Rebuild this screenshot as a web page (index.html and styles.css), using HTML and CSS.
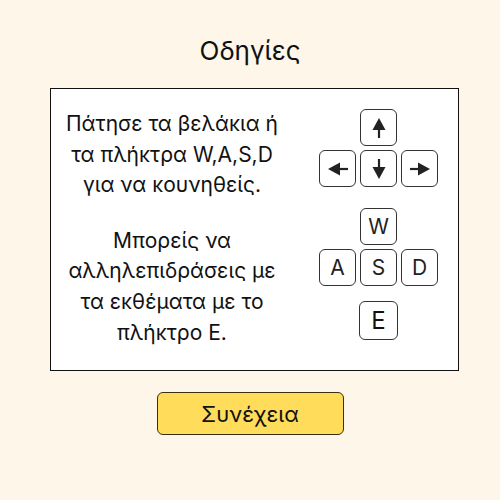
FILE: index.html
```html
<!DOCTYPE html>
<html lang="el">
<head>
<meta charset="utf-8">
<link rel="stylesheet" href="styles.css">
</head>
<body>
<div class="page">
  <h1 class="title">Οδηγίες</h1>
  <div class="panel">
    <div class="texts">
      <p class="para">Πάτησε τα βελάκια ή<br>τα πλήκτρα W,A,S,D<br>για να κουνηθείς.</p>
      <p class="para">Μπορείς να<br>αλληλεπιδράσεις με<br>τα εκθέματα με το<br>πλήκτρο E.</p>
    </div>
    <div class="keys">
      <div class="pad pad-arrows">
        <div class="row">
          <div class="key"><svg width="16" height="22" viewBox="0 0 16 22"><path d="M8 1 L14.5 13 L1.5 13 Z" fill="#222"/><path d="M8 12 V21" stroke="#222" stroke-width="2.2"/></svg></div>
        </div>
        <div class="row">
          <div class="key"><svg width="22" height="16" viewBox="0 0 22 16"><path d="M1 8 L13 1.5 L13 14.5 Z" fill="#222"/><path d="M12 8 H21" stroke="#222" stroke-width="2.2"/></svg></div>
          <div class="key"><svg width="16" height="22" viewBox="0 0 16 22"><path d="M8 21 L14.5 9 L1.5 9 Z" fill="#222"/><path d="M8 1 V10" stroke="#222" stroke-width="2.2"/></svg></div>
          <div class="key"><svg width="22" height="16" viewBox="0 0 22 16"><path d="M21 8 L9 1.5 L9 14.5 Z" fill="#222"/><path d="M1 8 H10" stroke="#222" stroke-width="2.2"/></svg></div>
        </div>
      </div>
      <div class="pad pad-wasd">
        <div class="row"><div class="key letter">W</div></div>
        <div class="row"><div class="key letter">A</div><div class="key letter">S</div><div class="key letter">D</div></div>
      </div>
      <div class="pad">
        <div class="row"><div class="key key-e">E</div></div>
      </div>
    </div>
  </div>
  <button class="btn">Συνέχεια</button>
</div>
</body>
</html>
```

FILE: styles.css
```css
html, body {
  margin: 0;
  padding: 0;
  background: #fdf6e9;
  font-family: Inter, "Noto Sans", sans-serif;
  color: #111;
}
.page {
  width: 500px;
  height: 500px;
  display: flex;
  flex-direction: column;
  align-items: center;
}
.title {
  margin: 33px 0 0;
  height: 35px;
  line-height: 35px;
  font-size: 26px;
  font-weight: 400;
}
.panel {
  margin-top: 20px;
  margin-left: 9px;
  width: 407px;
  height: 281px;
  background: #fff;
  border: 1px solid #111;
  display: flex;
}
.texts {
  width: 242px;
  padding-top: 20px;
  display: flex;
  flex-direction: column;
  align-items: center;
  gap: 25px;
}
.para {
  margin: 0;
  text-align: center;
  font-size: 21px;
  line-height: 30.6px;
}
.keys {
  flex: 1;
  display: flex;
  flex-direction: column;
  align-items: center;
  padding-top: 20px;
  padding-left: 6px;
}
.pad {
  display: flex;
  flex-direction: column;
  align-items: center;
  gap: 4px;
}
.pad-arrows { margin-bottom: 21px; }
.pad-wasd { margin-bottom: 15px; }
.row {
  display: flex;
  gap: 4px;
}
.key {
  box-sizing: border-box;
  width: 37px;
  height: 37px;
  border: 1.5px solid #333;
  border-radius: 6px;
  background: #fff;
  display: flex;
  align-items: center;
  justify-content: center;
}
.letter {
  font-size: 21px;
  color: #222;
}
.key-e {
  width: 39px;
  height: 39px;
  font-size: 24px;
  color: #111;
}
.btn {
  margin-top: 21px;
  width: 187px;
  height: 43px;
  background: #ffdc5a;
  border: 1px solid #3a2f10;
  border-radius: 6px;
  font-family: Inter, "Noto Sans", sans-serif;
  font-size: 22px;
  color: #111;
  cursor: pointer;
  padding: 0;
}
```
